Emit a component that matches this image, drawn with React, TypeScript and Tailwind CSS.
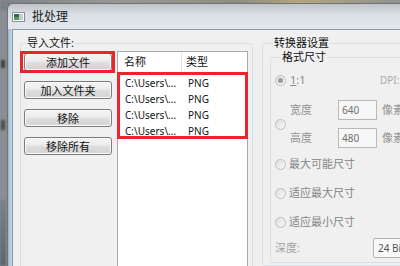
import React from "react";

const ROWS = ["C:\\Users\\...", "C:\\Users\\...", "C:\\Users\\...", "C:\\Users\\..."];

function Button({ label }: { label: string }) {
  return (
    <div className="flex h-[18px] w-[88px] items-center justify-center rounded-[3px] border border-[#7a7a7a] bg-[linear-gradient(#f4f4f4,#ececec_45%,#dedede_50%,#d2d2d2)] text-[11px] leading-none text-[#111] shadow-[inset_0_0_0_1px_#fbfbfb]">
      {label}
    </div>
  );
}

function Radio({ checked }: { checked?: boolean }) {
  return (
    <span className="flex h-[11px] w-[11px] shrink-0 items-center justify-center rounded-full border border-[#bdbdbd] bg-[linear-gradient(135deg,#dedede,#f9f9f9)]">
      {checked && <span className="h-[5px] w-[5px] rounded-full bg-[#9a9a9a]" />}
    </span>
  );
}

function SizeRow({ label, value }: { label: string; value: string }) {
  return (
    <div className="flex h-[20px] items-center">
      <span className="w-[48px]">{label}</span>
      <div className="flex h-[20px] w-[39px] items-center border border-[#b9b9b9] bg-[#f7f7f7] pl-[3px] text-[10px] text-[#707070]">
        {value}
      </div>
      <span className="ml-[5px]">像素</span>
    </div>
  );
}

function TitleIcon() {
  return (
    <svg width="13" height="10" viewBox="0 0 13 10">
      <rect x="0.5" y="0.5" width="12" height="9" fill="#fdfdfd" stroke="#8a8f96" />
      <rect x="2" y="2" width="5" height="6" fill="#2f6a5c" />
      <rect x="2" y="5" width="5" height="3" fill="#4f9a5a" />
      <rect x="7" y="2" width="4" height="6" fill="#c3cad2" />
    </svg>
  );
}

export default function App() {
  return (
    <div className="relative h-[266px] w-[400px] overflow-hidden bg-[linear-gradient(90deg,#8a8d91,#9a9ea3)] font-['Noto_Sans','Noto_Sans_CJK_SC',sans-serif]">
      {/* blurred desktop behind the window */}
      <div className="absolute left-0 top-0 h-[10px] w-[400px] bg-[linear-gradient(90deg,#7c8085,#9b9a92_30%,#8e8a7c_60%,#b9a978_75%,#8d8e8f)] blur-[1px]" />
      <div className="absolute left-[1px] top-[60px] h-[8px] w-[4px] bg-[#3c3f44] blur-[1px]" />
      <div className="absolute left-[1px] top-[120px] h-[10px] w-[4px] bg-[#4a4d52] blur-[1px]" />
      <div className="absolute left-[0px] top-[200px] h-[66px] w-[6px] bg-[linear-gradient(#7d8187,#5f646b)] blur-[1px]" />

      <div className="absolute left-[7px] top-[3px] flex h-[300px] w-[420px] flex-col overflow-hidden rounded-tl-[6px] border-l border-t border-[#6b737c]">
        <div className="flex h-[25px] shrink-0 items-center bg-[linear-gradient(#bfc3c6,#d9dfe5_40%,#e2e8ee)] pl-[4px]">
          <TitleIcon />
          <span className="ml-[7px] text-[12px] leading-none text-[#1b1b1b]">批处理</span>
        </div>
        <div className="flex flex-1">
          <div className="w-[4px] shrink-0 bg-[linear-gradient(90deg,#9db4ce,#c9d8e8)]" />
          <div className="flex flex-1 items-start border-l border-t border-[#8d98a5] bg-[#f0f0f0] pl-[7px] pt-[7px] text-[11px] leading-[12px] text-[#111]">
            {/* 导入文件 */}
            <fieldset className="h-[300px] w-[233px] shrink-0 rounded-[3px] border border-[#d5dfe5]">
              <legend className="ml-[5px] px-[1px]">导入文件:</legend>
              <div className="flex items-start">
                <div className="ml-[3px] mt-[4px] flex flex-col gap-[10px]">
                  <div className="relative">
                    <Button label="添加文件" />
                    <div className="pointer-events-none absolute left-[-4px] top-[-2px] h-[22px] w-[95px] border-[3px] border-[#e8262b]" />
                  </div>
                  <Button label="加入文件夹" />
                  <Button label="移除" />
                  <Button label="移除所有" />
                </div>
                <div className="relative ml-[5px] mt-[2px] h-[230px] w-[131px] border border-[#a3a9b1] bg-white">
                  <div className="flex h-[20px] items-center">
                    <div className="flex h-full w-[64px] items-center border-r border-[#e4e7eb] pl-[6px]">名称</div>
                    <div className="pl-[4px]">类型</div>
                  </div>
                  <div className="pt-[3px] text-[10px]">
                    {ROWS.map((path, i) => (
                      <div key={i} className="flex h-[16px] items-center">
                        <span className="w-[64px] pl-[7px]">{path}</span>
                        <span className="pl-[6px]">PNG</span>
                      </div>
                    ))}
                  </div>
                  <div className="pointer-events-none absolute left-[-1px] right-[-1px] top-[20px] h-[67px] border-[3px] border-[#e8262b]" />
                </div>
              </div>
            </fieldset>

            {/* 转换器设置 */}
            <fieldset className="ml-[9px] w-[200px] shrink-0 rounded-[3px] border border-[#d5dfe5] pb-[2px] pl-[7px]">
              <legend className="ml-[3px] px-[1px]">转换器设置</legend>
              <fieldset className="mt-[2px] rounded-[3px] border border-[#d5dfe5] pb-[4px] pl-[4px] text-[#939393]">
                <legend className="ml-[6px] px-[1px] text-[#111]">格式尺寸</legend>
                <div className="mt-[11px] flex h-[12px] items-center">
                  <div className="flex w-[105px] items-center">
                    <Radio checked />
                    <span className="ml-[4px] text-[#8a8a8a]">
                      <span className="underline">1</span>:1
                    </span>
                  </div>
                  <span className="text-[10px] text-[#a8a8a8]">DPI:</span>
                </div>
                <div className="mt-[14px] flex items-center">
                  <Radio />
                  <div className="ml-[4px] flex flex-col gap-[8px]">
                    <SizeRow label="宽度" value="640" />
                    <SizeRow label="高度" value="480" />
                  </div>
                </div>
                <div className="mt-[10px] flex flex-col gap-[17px]">
                  {["最大可能尺寸", "适应最大尺寸", "适应最小尺寸"].map((label) => (
                    <div key={label} className="flex h-[12px] items-center">
                      <Radio />
                      <span className="ml-[3px] text-[#858585]">{label}</span>
                    </div>
                  ))}
                </div>
                <div className="mt-[10px] flex h-[20px] items-center">
                  <span className="w-[98px] text-[#a0a0a0]">深度:</span>
                  <div className="flex h-[20px] w-[80px] items-center rounded-[2px] border border-[#b3b3b3] bg-[#f9f9f9] pl-[4px] text-[10px] text-[#555]">
                    24 Bits
                  </div>
                </div>
              </fieldset>
            </fieldset>
          </div>
        </div>
      </div>
    </div>
  );
}
